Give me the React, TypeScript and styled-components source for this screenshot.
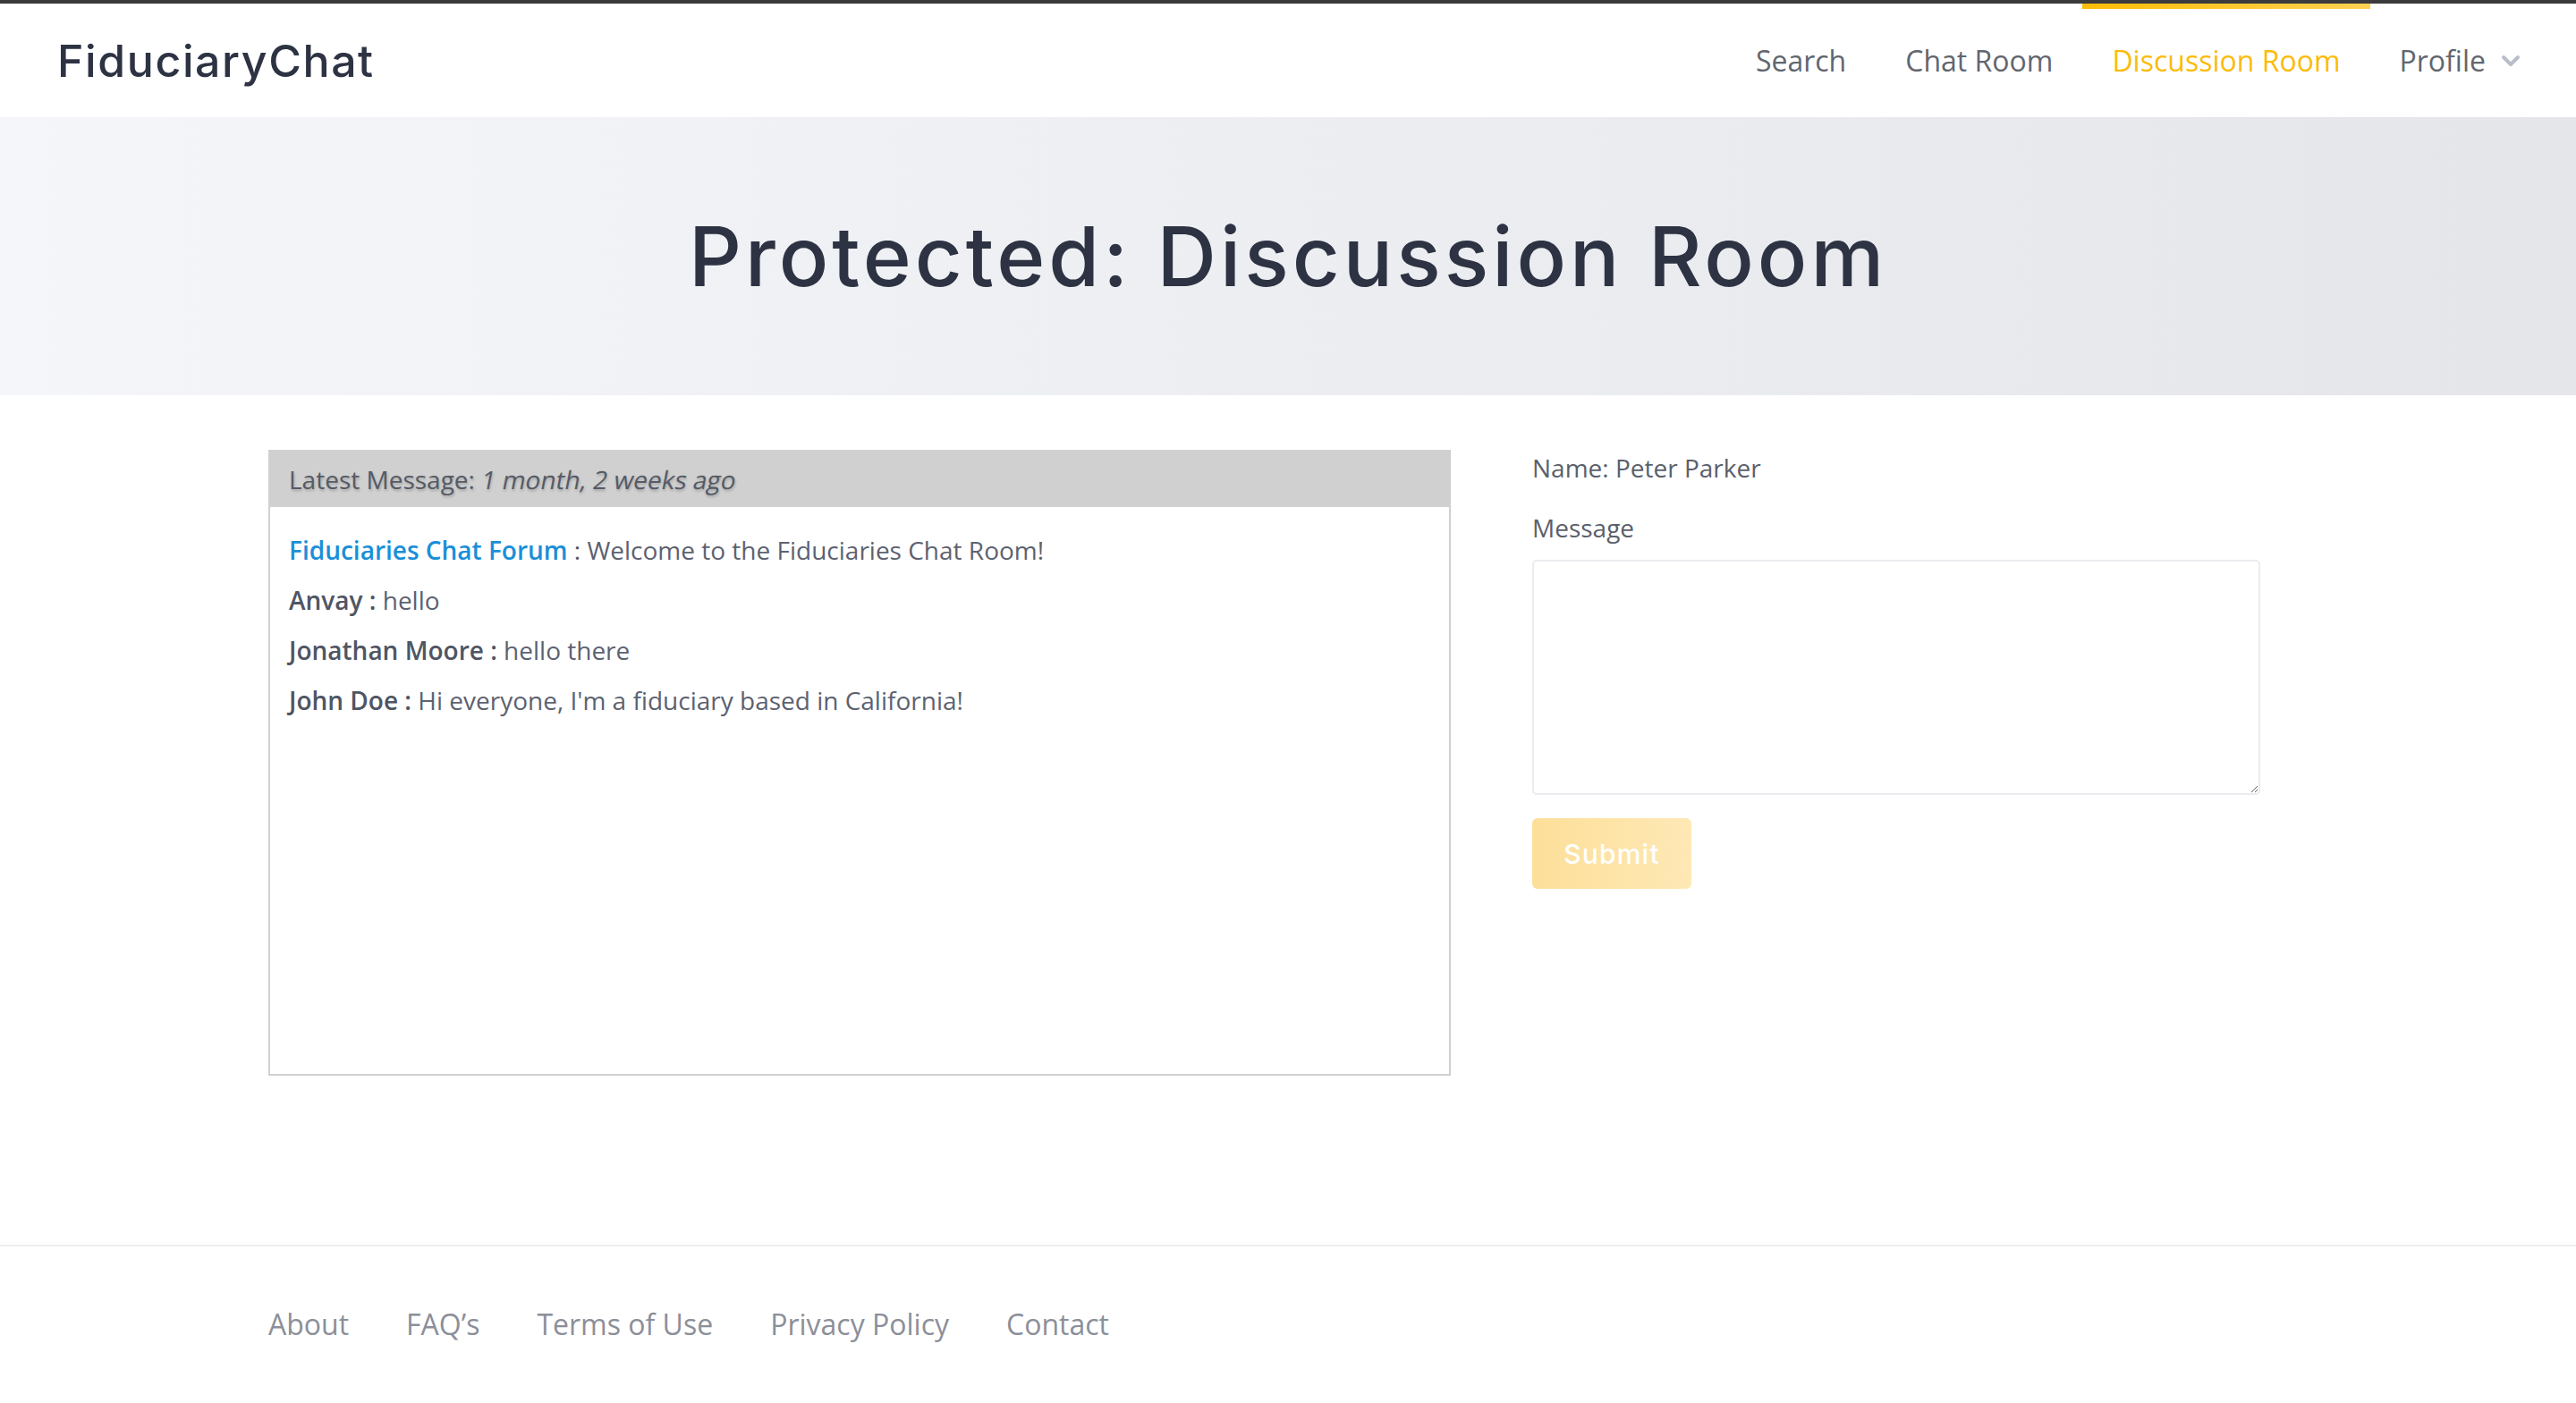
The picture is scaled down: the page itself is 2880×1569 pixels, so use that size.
import React from "react";
import styled, { createGlobalStyle } from "styled-components";

const GlobalStyle = createGlobalStyle`
  html, body { margin: 0; padding: 0; background: #ffffff; }
  body { font-family: "Open Sans", "Liberation Sans", sans-serif; color: #5a606b; }
  * { box-sizing: border-box; }
`;

const TopStrip = styled.div`
  height: 4px;
  background: #3b3b3d;
`;

const Header = styled.header`
  height: 127px;
  display: flex;
  align-items: stretch;
  justify-content: space-between;
  padding: 0 29px 0 64px;
  background: #ffffff;
`;

const Logo = styled.div`
  display: flex;
  align-items: center;
  font-family: "Inter", "Liberation Sans", sans-serif;
  font-weight: 500;
  font-size: 50px;
  letter-spacing: 1.6px;
  color: #2d3343;
`;

const Nav = styled.nav`
  display: flex;
  align-items: stretch;
`;

const NavItem = styled.a<{ $active?: boolean }>`
  position: relative;
  display: flex;
  align-items: center;
  gap: 17px;
  padding: 0 33px;
  font-size: 32px;
  color: ${(p) => (p.$active ? "#fbbc0a" : "#62666f")};
  text-decoration: none;
  &::before {
    content: "";
    position: absolute;
    left: 0;
    right: 0;
    top: 0;
    height: 6px;
    background: ${(p) =>
      p.$active ? "linear-gradient(90deg, #fbbd08, #ffd152)" : "transparent"};
  }
`;

const Hero = styled.section`
  height: 311px;
  display: flex;
  align-items: center;
  justify-content: center;
  background: linear-gradient(90deg, #f4f6f9 0%, #e4e6ea 100%);
`;

const Title = styled.h1`
  margin: 0;
  font-family: "Inter", "Liberation Sans", sans-serif;
  font-weight: 500;
  font-size: 92px;
  letter-spacing: 4px;
  color: #2d3343;
`;

const Main = styled.main`
  padding: 61px 0 189px;
`;

const Container = styled.div`
  width: 2280px;
  margin: 0 auto;
  display: flex;
  align-items: flex-start;
  gap: 91px;
`;

const ChatBox = styled.div`
  width: 1322px;
  height: 700px;
  border: 2px solid #d0d0d0;
  display: flex;
  flex-direction: column;
`;

const ChatHeader = styled.div`
  height: 62px;
  flex: none;
  display: flex;
  align-items: center;
  padding: 0 21px;
  background: #d0d0d0;
  font-size: 28px;
  color: #555a66;
  text-shadow: 1px 2px 3px rgba(0, 0, 0, 0.22);
`;

const Ago = styled.span`
  display: inline-block;
  margin-left: 8px;
  transform: skewX(-11deg);
`;

const Messages = styled.div`
  padding: 20px 21px;
`;

const Line = styled.p`
  margin: 0;
  font-size: 28px;
  line-height: 56px;
  color: #5c6270;
`;

const Author = styled.span<{ $link?: boolean }>`
  font-weight: 600;
  color: ${(p) => (p.$link ? "#1a8fd8" : "#4f5563")};
`;

const Sep = styled.span<{ $bold?: boolean }>`
  font-weight: ${(p) => (p.$bold ? 600 : 400)};
  color: #4f5563;
`;

const Form = styled.form`
  width: 814px;
  display: flex;
  flex-direction: column;
`;

const Label = styled.label<{ $gap?: number }>`
  font-size: 28px;
  line-height: 40px;
  color: #5a606b;
  margin-top: ${(p) => p.$gap ?? 0}px;
`;

const TextArea = styled.textarea`
  margin-top: 16px;
  width: 814px;
  height: 263px;
  border: 2px solid #ebecf0;
  border-radius: 5px;
  font-family: inherit;
  font-size: 28px;
  outline: none;
  resize: vertical;
`;

const SubmitButton = styled.button`
  margin-top: 26px;
  width: 178px;
  height: 79px;
  border: none;
  border-radius: 6px;
  background: linear-gradient(90deg, #fddf99, #fee8b5);
  color: #ffffff;
  font-family: "Inter", "Liberation Sans", sans-serif;
  font-weight: 500;
  font-size: 30px;
  letter-spacing: 1.2px;
  cursor: default;
`;

const Footer = styled.footer`
  border-top: 2px solid #eceef2;
  padding: 65px 0;
`;

const FooterLinks = styled.div`
  width: 2280px;
  margin: 0 auto;
  display: flex;
  gap: 64px;
`;

const FooterLink = styled.a`
  font-size: 32px;
  color: #8b8f99;
  text-decoration: none;
`;

const Chevron = () => (
  <svg width="22" height="14" viewBox="0 0 22 14" aria-hidden="true">
    <polyline
      points="3,3 11,11 19,3"
      fill="none"
      stroke="#b8bdc9"
      strokeWidth="4"
      strokeLinecap="round"
      strokeLinejoin="round"
    />
  </svg>
);

const messages = [
  { name: "Anvay", text: "hello" },
  { name: "Jonathan Moore", text: "hello there" },
  { name: "John Doe", text: "Hi everyone, I'm a fiduciary based in California!" },
];

export default function App() {
  return (
    <>
      <GlobalStyle />
      <TopStrip />
      <Header>
        <Logo>FiduciaryChat</Logo>
        <Nav>
          <NavItem>Search</NavItem>
          <NavItem>Chat Room</NavItem>
          <NavItem $active>Discussion Room</NavItem>
          <NavItem>
            Profile
            <Chevron />
          </NavItem>
        </Nav>
      </Header>
      <Hero>
        <Title>Protected: Discussion Room</Title>
      </Hero>
      <Main>
        <Container>
          <ChatBox>
            <ChatHeader>
              Latest Message:<Ago>1 month, 2 weeks ago</Ago>
            </ChatHeader>
            <Messages>
              <Line>
                <Author $link>Fiduciaries Chat Forum</Author>
                <Sep> : </Sep>Welcome to the Fiduciaries Chat Room!
              </Line>
              {messages.map((m) => (
                <Line key={m.name}>
                  <Author>{m.name}</Author>
                  <Sep $bold> : </Sep>
                  {m.text}
                </Line>
              ))}
            </Messages>
          </ChatBox>
          <Form onSubmit={(e) => e.preventDefault()}>
            <Label>Name: Peter Parker</Label>
            <Label $gap={27}>Message</Label>
            <TextArea />
            <SubmitButton type="submit" disabled>
              Submit
            </SubmitButton>
          </Form>
        </Container>
      </Main>
      <Footer>
        <FooterLinks>
          <FooterLink>About</FooterLink>
          <FooterLink>FAQ’s</FooterLink>
          <FooterLink>Terms of Use</FooterLink>
          <FooterLink>Privacy Policy</FooterLink>
          <FooterLink>Contact</FooterLink>
        </FooterLinks>
      </Footer>
    </>
  );
}
